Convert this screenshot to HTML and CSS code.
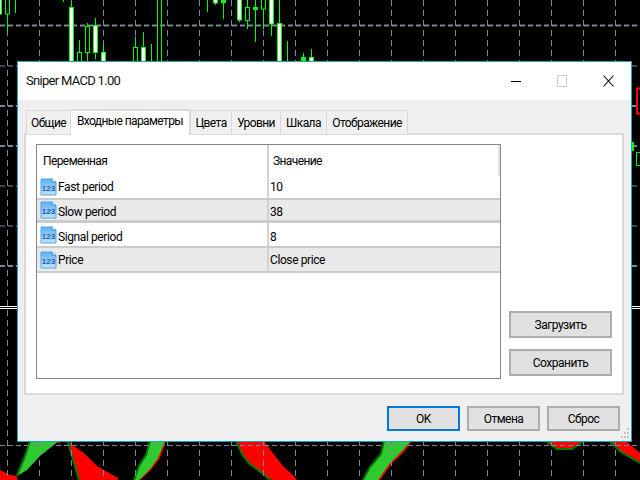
FILE: index.html
```html
<!DOCTYPE html>
<html lang="ru">
<head>
<meta charset="utf-8">
<title>Sniper MACD 1.00</title>
<link rel="stylesheet" href="styles.css">
</head>
<body>
<svg class="chart" width="640" height="480" viewBox="0 0 640 480">
  <defs>
    <linearGradient id="iconFill" x1="0" y1="0" x2="0" y2="1">
      <stop offset="0" stop-color="#5fb0f2"/>
      <stop offset="1" stop-color="#c6e3fa"/>
    </linearGradient>
    <symbol id="i123" viewBox="0 0 17 18">
      <path d="M1 1H12L16 4V17H1Z" fill="url(#iconFill)" stroke="#4aa6ee"/>
      <path d="M12 1V4H16" fill="#fff" stroke="#1e90e8"/>
      <text x="8.5" y="13" text-anchor="middle" class="icon-text">123</text>
    </symbol>
  </defs>
  <g class="bears">
    <path d="M0 470L10 475L17 476V480H0Z"/>
    <path d="M68 441L72 445L84 453L97 466L118 478V480H79Z"/>
    <path d="M236 441H264L272 452L283 466L296 478V480H272L262 474L250 465L243 455Z"/>
    <path d="M547 441H582L572 449H558Z"/>
    <path d="M610 441H626L640 453V462L622 452Z"/>
    <path d="M57 441H62L58 444Z"/>
    <path d="M166 441L160 458L150 471L140 480H137L148 468L158 456L165 441Z"/>
    <path d="M412 441L404 452L392 463L380 480H377L390 462L402 451L410 441Z"/>
  </g>
  <g class="bull-edge">
    <path d="M68 441L72 456L79 480"/>
    <path d="M236 441L243 456L250 464L262 473L270 480"/>
    <path d="M547 442L557 449H572L582 442"/>
    <path d="M610 442L621 452L640 463"/>
  </g>
  <g class="bulls">
    <path d="M30 441L27 450L24 459L20 468L17 476L27 470L40 456L50 448L59 441Z"/>
    <path d="M150 441L146 455L139 466L134 480H139L150 469L158 458L165 441Z"/>
    <path d="M384 441L381 454L370 467L363 480H378L390 463L402 451L411 441Z"/>
  </g>
  <g class="bull-shadow">
    <path d="M30 441L27 450L24 459L20 468L17 476"/>
    <path d="M150 441L146 455L139 466L134 480"/>
    <path d="M384 441L381 454L370 467L363 480"/>
  </g>
  <g class="grid-v">
    <path d="M7 0V480M39 0V480M71 0V480M103 0V480M135 0V480M167 0V480M199 0V480M231 0V480M263 0V480M295 0V480M327 0V480M359 0V480M391 0V480M423 0V480M455 0V480M487 0V480M519 0V480M551 0V480M583 0V480M615 0V480"/>
  </g>
  <g class="grid-h">
    <path d="M0 66H640M0 186H640M0 226H640M0 445.5H640"/>
  </g>
  <g class="grid-hb">
    <path d="M0 25.5H640M0 106H640M0 146H640M0 266H640"/>
  </g>
  <path class="price-line" d="M0 306.5H640M0 308.5H640"/>
  <g class="wicks">
    <path d="M7 14V33M15 0V13M63 0V2M71 1V7M79 40V61M87 23V61M95 18V59M103 44V52M135 37V47M143 32V47M151 44V61M157 0V61M161 0V61M207 0V12M215 3V5M223 3V19M239 20V22M247 0V29M255 0V42M263 9V29M271 24V36M279 0V23M287 41V61M303 53V57M311 49V57"/>
  </g>
  <g class="candle-up">
    <rect x="5.5" y="-2" width="4" height="16"/>
    <rect x="77.5" y="52.5" width="4" height="10"/>
    <rect x="85.5" y="26.5" width="4" height="26"/>
    <rect x="133.5" y="47.5" width="4" height="15"/>
    <rect x="245.5" y="7.5" width="4" height="13"/>
    <rect x="261.5" y="-2" width="4" height="11"/>
    <rect x="636.5" y="152.5" width="8" height="13"/>
  </g>
  <g class="candle-down">
    <rect x="-3.5" y="-2" width="5" height="16"/>
    <rect x="69.5" y="7.5" width="4" height="56"/>
    <rect x="93.5" y="25.5" width="4" height="27"/>
    <rect x="101.5" y="52.5" width="4" height="10"/>
    <rect x="141.5" y="47.5" width="4" height="15"/>
    <rect x="213.5" y="-2" width="4" height="5"/>
    <rect x="237.5" y="-2" width="4" height="22"/>
    <rect x="269.5" y="-2" width="4" height="26"/>
    <rect x="277.5" y="23.5" width="4" height="40"/>
    <rect x="309.5" y="57.5" width="4" height="6"/>
    <rect x="632.5" y="142.5" width="1" height="8"/>
  </g>
  <g class="candle-solid">
    <rect x="221" y="-2" width="5" height="5"/>
    <rect x="253" y="7" width="5" height="3"/>
    <rect x="301" y="57" width="5" height="6"/>
  </g>
  <rect class="candle-red" x="637" y="88.5" width="8" height="25"/>
</svg>

<main class="dialog">
  <header class="titlebar">
    <h1 class="title">Sniper MACD 1.00</h1>
    <div class="controls">
      <svg class="ctl" width="11" height="14" viewBox="0 0 11 14"><path class="ctl-min" d="M0 7.5H10"/></svg>
      <svg class="ctl" width="11" height="14" viewBox="0 0 11 14"><rect class="ctl-max" x="0.5" y="1.5" width="9" height="11"/></svg>
      <svg class="ctl" width="11" height="14" viewBox="0 0 11 14"><path class="ctl-close" d="M0.5 1.5L10.5 12.5M10.5 1.5L0.5 12.5"/></svg>
    </div>
  </header>
  <div class="body">
    <nav class="tabs">
      <div class="tab tab-a">Общие</div>
      <div class="tab tab-active">Входные параметры</div>
      <div class="tab tab-b">Цвета</div>
      <div class="tab tab-c">Уровни</div>
      <div class="tab tab-d">Шкала</div>
      <div class="tab tab-e">Отображение</div>
    </nav>
    <section class="panel">
      <div class="table">
        <div class="row head">
          <div class="c1 head-c1">Переменная</div>
          <div class="c2 head-c2">Значение</div>
        </div>
        <div class="row r1">
          <div class="c1"><svg class="icon" width="17" height="18"><use href="#i123"/></svg>Fast period</div>
          <div class="c2">10</div>
        </div>
        <div class="row r2 alt">
          <div class="c1"><svg class="icon" width="17" height="18"><use href="#i123"/></svg><span class="low">Slow period</span></div>
          <div class="c2"><span class="low">38</span></div>
        </div>
        <div class="row r3">
          <div class="c1"><svg class="icon" width="17" height="18"><use href="#i123"/></svg><span class="low">Signal period</span></div>
          <div class="c2"><span class="low">8</span></div>
        </div>
        <div class="row r4 alt">
          <div class="c1"><svg class="icon" width="17" height="18"><use href="#i123"/></svg>Price</div>
          <div class="c2">Close price</div>
        </div>
      </div>
      <div class="side">
        <button class="btn btn-side">Загрузить</button>
        <button class="btn btn-side">Сохранить</button>
      </div>
    </section>
    <footer class="footer">
      <button class="btn btn-foot btn-default">OK</button>
      <button class="btn btn-foot">Отмена</button>
      <button class="btn btn-foot">Сброс</button>
    </footer>
    <svg class="grip" width="9" height="10" viewBox="0 0 9 10">
      <path d="M6 0h2v2h-2zM3 4h2v2h-2zM6 4h2v2h-2zM0 8h2v2h-2zM3 8h2v2h-2zM6 8h2v2h-2z"/>
    </svg>
  </div>
</main>
</body>
</html>
```
FILE: styles.css
```css
* { box-sizing: border-box; }
html, body { margin: 0; padding: 0; width: 640px; height: 480px; overflow: hidden; background: #000; }
body { font-family: Roboto, "Liberation Sans", sans-serif; font-size: 12px; letter-spacing: -0.4px; color: #000; }

.chart { position: absolute; left: 0; top: 0; display: block; }
.grid-v path { stroke: #778899; stroke-width: 1; stroke-dasharray: 6 4; fill: none; transform: translateX(0.5px); }
.grid-h path { stroke: #778899; stroke-width: 1; stroke-dasharray: 5 3; fill: none; }
.grid-hb path { stroke: #778899; stroke-width: 2; stroke-dasharray: 5 3; fill: none; }
.price-line { stroke: #fff; stroke-width: 1; fill: none; }
.wicks path { stroke: #00ff00; stroke-width: 1; fill: none; transform: translateX(0.5px); }
.candle-up rect { fill: #000; stroke: #00ff00; stroke-width: 1; }
.candle-down rect { fill: #fff; stroke: #00ff00; stroke-width: 1; }
.candle-solid rect { fill: #00ff00; }
.candle-red { fill: #000; stroke: #ff0000; stroke-width: 2; }
.bears path { fill: #ff0000; }
.bulls path { fill: #2ecb2e; }
.bull-edge path, .bull-shadow path { fill: none; stroke: #007a00; stroke-width: 2; }
.icon-text { font-family: "Liberation Sans", sans-serif; font-size: 8px; font-weight: 700; letter-spacing: 0; fill: #1a5fb8; }

.dialog {
  position: absolute; left: 17px; top: 61px; width: 615px; height: 381px;
  border: 1px solid #1aa6b8; background: #efefef;
  display: flex; flex-direction: column;
}
.titlebar { height: 38px; background: #fff; display: flex; align-items: center; justify-content: space-between; padding-left: 8px; flex: none; }
.title { margin: 0 0 2px; font-size: 13px; font-weight: 400; letter-spacing: -0.7px; color: #111; }
.controls { display: flex; gap: 35px; padding-right: 17px; }
.ctl { display: block; }
.ctl-min { stroke: #000; stroke-width: 1; fill: none; }
.ctl-max { stroke: #ccc; stroke-width: 1; fill: none; }
.ctl-close { stroke: #000; stroke-width: 1.1; fill: none; }

.body { flex: 1; display: flex; flex-direction: column; padding: 9px 7px 0 6px; position: relative; }
.tabs { display: flex; align-items: flex-end; height: 25px; padding-left: 2px; position: relative; z-index: 1; margin-bottom: -1px; letter-spacing: -0.6px; }
.tab { height: 24px; border: 1px solid #d9d9d9; border-bottom: 0; border-left: 0; background: #f0f0f0; line-height: 25px; text-align: center; white-space: nowrap; }
.tab-a { width: 45px; border-left: 1px solid #d9d9d9; }
.tab-active { width: 120px; height: 26px; background: #fff; border-left: 1px solid #d9d9d9; border-width: 2px 2px 0 0; line-height: 21px; margin-bottom: -1px; }
.tab-b { width: 41px; }
.tab-c { width: 49px; }
.tab-d { width: 46px; }
.tab-e { width: 81px; }

.panel { flex: none; height: 262px; background: #fff; border: 2px solid #d9d9d9; padding: 9px 10px 15px 10px; display: flex; gap: 8px; }
.table { width: 465px; height: 235px; border: 1px solid #84848c; flex: none; }
.row { display: flex; border-bottom: 2px solid #cbcbcb; height: 24px; align-items: stretch; }
.head { height: 31px; border-bottom: 0; border-right: 2px solid #e2e2e2; letter-spacing: -0.6px; }
.r2 { height: 23px; border-bottom-width: 3px; }
.r3 { height: 25px; }
.r4 { height: 25px; }
.alt { background: #e9e9e9; }
.c1 { width: 230px; display: flex; align-items: center; padding-left: 3px; border-right: 0; }
.c2 { flex: 1; display: flex; align-items: center; padding-left: 1px; border-left: 2px solid #d2d2d2; }
.head-c1 { padding-left: 6px; padding-top: 1px; }
.head-c2 { padding-left: 4px; padding-top: 1px; }
.icon { margin-right: 1px; flex: none; }
.low { position: relative; top: 2px; }

.side { flex: 1; display: flex; flex-direction: column; justify-content: flex-end; gap: 11px; padding-bottom: 2px; }
.btn { font: inherit; letter-spacing: -0.5px; color: #000; background: #e1e1e1; border: 2px solid #adadad; padding: 0; }
.btn-side { width: 103px; height: 27px; }

.footer { display: flex; justify-content: flex-end; gap: 7px; padding-top: 11px; padding-right: 4px; }
.btn-foot { width: 73px; height: 25px; }
.btn-default { border: 2px solid #0078d7; }
.grip { position: absolute; right: 1px; bottom: 3px; fill: #c4c4c4; }
```
